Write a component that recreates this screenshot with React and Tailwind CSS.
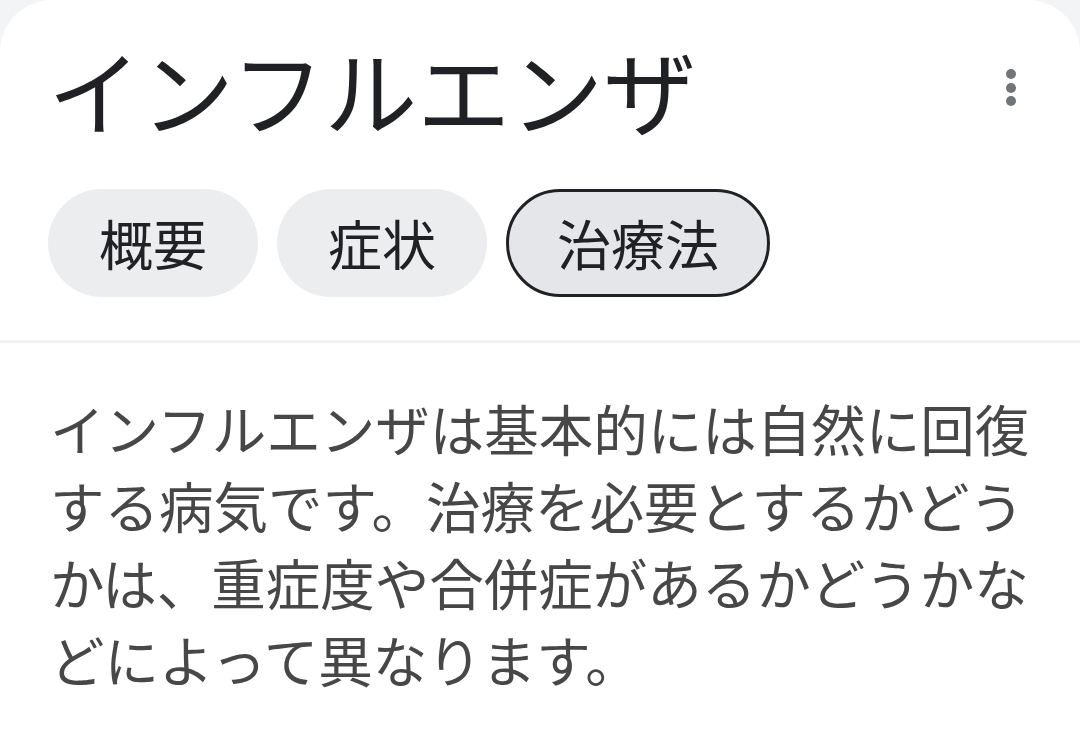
const tabs = [
  { label: "概要", active: false },
  { label: "症状", active: false },
  { label: "治療法", active: true },
];

export default function App() {
  return (
    <div
      className="min-h-screen bg-[#f3f4f5]"
      style={{ fontFamily: '"Noto Sans CJK JP", "Noto Sans", sans-serif' }}
    >
      <div className="bg-white rounded-t-[52px] min-h-[754px]">
        {/* Header */}
        <div className="flex items-start justify-between pl-[48px] pr-[64px] pt-[42px]">
          <h1 className="text-[93px] leading-none text-[#202124]">
            インフルエンザ
          </h1>
          <button className="flex flex-col items-center gap-[3.5px] mt-[27px]" aria-label="More">
            <span className="w-[10px] h-[10px] rounded-full bg-[#70757a]" />
            <span className="w-[10px] h-[10px] rounded-full bg-[#70757a]" />
            <span className="w-[10px] h-[10px] rounded-full bg-[#70757a]" />
          </button>
        </div>

        {/* Tabs */}
        <div className="flex gap-[19px] px-[48px] mt-[54px] pb-[43px]">
          {tabs.map((t) => (
            <div
              key={t.label}
              className={`h-[108px] rounded-full flex items-center justify-center text-[54px] leading-none text-[#202124] ${
                t.active
                  ? "bg-[#e4e6e9] border-[3px] border-[#202124] px-[48px]"
                  : "bg-[#ebedef] px-[51px]"
              }`}
            >
              {t.label}
            </div>
          ))}
        </div>

        <div className="h-[3px] bg-[#f1f2f3]" />

        {/* Body */}
        <p className="pl-[50px] pr-[40px] pt-[46px] text-[54.5px] leading-[77px] text-[#474747]">
          インフルエンザは基本的には自然に回復する病気です。治療を必要とするかどうかは、重症度や合併症があるかどうかなどによって異なります。
        </p>
      </div>
    </div>
  );
}
